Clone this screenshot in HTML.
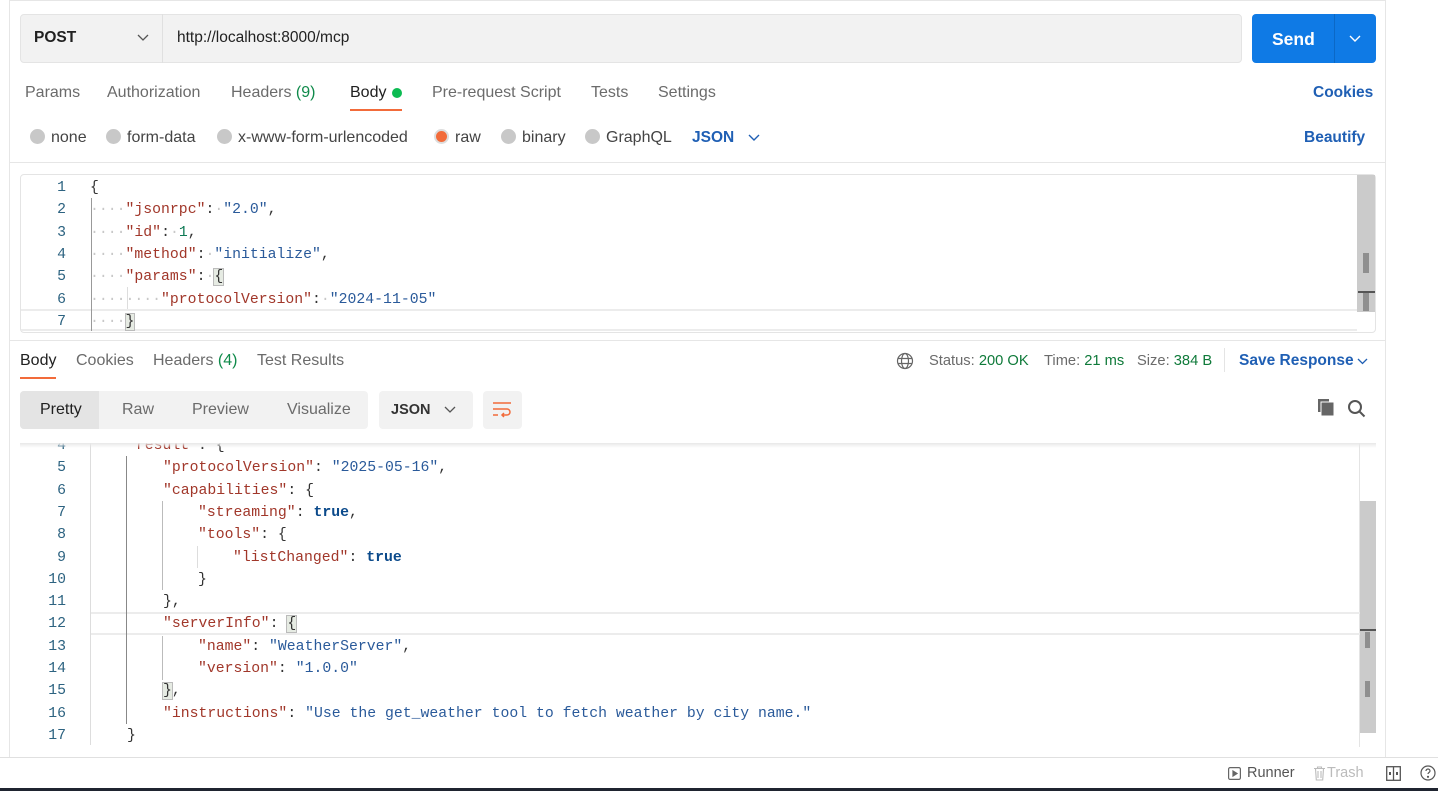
<!DOCTYPE html>
<html><head><meta charset="utf-8"><style>
*{margin:0;padding:0;box-sizing:border-box}
body{width:1438px;height:791px;overflow:hidden;background:#fff;font-family:"Liberation Sans",sans-serif;position:relative;color:#212121}
.a{position:absolute;white-space:nowrap}
.t{font-size:16px;color:#6b6b6b}
.code{font-family:"Liberation Mono",monospace;font-size:14.8px;line-height:22.3px}
.ln{position:absolute;width:40px;text-align:right;color:#2d6381;left:26px}
.k{color:#a1372a}.s{color:#2a5a9a}.n{color:#0f7a55}.b{color:#0b4a8b;font-weight:bold}.p{color:#333}
.dot{color:#c8c8c8}
.rad{display:inline-block;width:15px;height:15px;border-radius:50%;background:#c8c8c8;vertical-align:-2px;margin-right:6px}
.g{position:absolute;width:1px;background:#bbb}
</style></head><body>
<div class="a" style="left:9px;top:0;width:1377px;height:757px;border-left:1px solid #e6e6e6;border-right:1px solid #e6e6e6;border-top:1px solid #e6e6e6"></div>
<!-- URL bar -->
<div class="a" style="left:20px;top:14px;width:1222px;height:49px;background:#f2f2f2;border:1px solid #e4e4e4;border-radius:4px"></div>
<div class="a" style="left:162px;top:14px;width:1px;height:49px;background:#e0e0e0"></div>
<div class="a" style="left:34px;top:29px;font-size:15.5px;font-weight:bold;color:#212121">POST</div>
<svg class="a" style="left:137px;top:34px" width="12" height="8"><path d="M1 1l5 5 5-5" fill="none" stroke="#555" stroke-width="1.3"/></svg>
<div class="a" style="left:177px;top:29px;font-size:15.5px;color:#212121">http://localhost:8000/mcp</div>
<div class="a" style="left:1252px;top:14px;width:124px;height:49px;background:#0f7ae5;border-radius:4px"></div>
<div class="a" style="left:1334px;top:14px;width:1px;height:49px;background:#0b68c6"></div>
<div class="a" style="left:1272px;top:29px;font-size:17.5px;font-weight:bold;color:#fff">Send</div>
<svg class="a" style="left:1349px;top:35px" width="12" height="8"><path d="M1 1l5 5 5-5" fill="none" stroke="#fff" stroke-width="1.4"/></svg>
<!-- tabs -->
<div class="a t" style="left:25px;top:84px">Params</div>
<div class="a t" style="left:107px;top:84px">Authorization</div>
<div class="a t" style="left:231px;top:84px">Headers <span style="color:#0f8a4a">(9)</span></div>
<div class="a" style="left:350px;top:84px;font-size:16px;color:#212121">Body</div>
<div class="a" style="left:392px;top:88px;width:10px;height:10px;border-radius:50%;background:#0cbb52"></div>
<div class="a" style="left:350px;top:109px;width:52px;height:2px;background:#f26b3a"></div>
<div class="a t" style="left:432px;top:84px">Pre-request Script</div>
<div class="a t" style="left:591px;top:84px">Tests</div>
<div class="a t" style="left:658px;top:84px">Settings</div>
<div class="a" style="left:1313px;top:84px;font-size:15.5px;font-weight:bold;color:#1f5fb4">Cookies</div>
<!-- radios -->
<div class="a t" style="left:30px;top:129px;color:#444"><span class="rad"></span>none</div>
<div class="a t" style="left:106px;top:129px;color:#444"><span class="rad"></span>form-data</div>
<div class="a t" style="left:217px;top:129px;color:#444"><span class="rad"></span>x-www-form-urlencoded</div>
<div class="a t" style="left:434px;top:129px;color:#444"><span class="rad" style="background:#f26b3a;border:2px solid #ddd"></span>raw</div>
<div class="a t" style="left:501px;top:129px;color:#444"><span class="rad"></span>binary</div>
<div class="a t" style="left:585px;top:129px;color:#444"><span class="rad"></span>GraphQL</div>
<div class="a" style="left:692px;top:129px;font-size:15.5px;font-weight:bold;color:#1f5fb4">JSON</div>
<svg class="a" style="left:748px;top:134px" width="12" height="8"><path d="M1 1l5 5 5-5" fill="none" stroke="#1f5fb4" stroke-width="1.4"/></svg>
<div class="a" style="left:1304px;top:129px;font-size:15.5px;font-weight:bold;color:#1f5fb4">Beautify</div>
<div class="a" style="left:10px;top:162px;width:1375px;height:1px;background:#e6e6e6"></div>
<!-- request editor -->
<div class="a" style="left:20px;top:174px;width:1356px;height:159px;border:1px solid #e4e4e4;border-radius:4px"></div>
<div class="a" style="left:1357px;top:175px;width:18px;height:137px;background:#cbcbcb"></div>
<div class="a" style="left:1363px;top:253px;width:6px;height:20px;background:#8f8f8f"></div>
<div class="a" style="left:1358px;top:291px;width:17px;height:2px;background:#555"></div>
<div class="a" style="left:1363px;top:293px;width:6px;height:18px;background:#8f8f8f"></div>
<div class="a" style="left:21px;top:309px;width:1336px;height:22px;border-top:2px solid #ececec;border-bottom:2px solid #ececec"></div>
<div class="g" style="left:91px;top:198px;height:133px;background:#999"></div>
<div class="g" style="left:127px;top:287px;height:22px;background:#ddd"></div>
<div class="a code" style="left:0;top:177px;width:1340px">
<div class="ln" style="top:0">1</div><div class="ln" style="top:22.3px">2</div><div class="ln" style="top:44.6px">3</div><div class="ln" style="top:66.9px">4</div><div class="ln" style="top:89.2px">5</div><div class="ln" style="top:111.5px">6</div><div class="ln" style="top:133.8px">7</div>
<div class="a" style="left:90px;top:0"><span class="p">{</span></div>
<div class="a" style="left:90px;top:22.3px"><span class="dot">····</span><span class="k">"jsonrpc"</span><span class="p">:</span><span class="dot">·</span><span class="s">"2.0"</span><span class="p">,</span></div>
<div class="a" style="left:90px;top:44.6px"><span class="dot">····</span><span class="k">"id"</span><span class="p">:</span><span class="dot">·</span><span class="n">1</span><span class="p">,</span></div>
<div class="a" style="left:90px;top:66.9px"><span class="dot">····</span><span class="k">"method"</span><span class="p">:</span><span class="dot">·</span><span class="s">"initialize"</span><span class="p">,</span></div>
<div class="a" style="left:90px;top:89.2px"><span class="dot">····</span><span class="k">"params"</span><span class="p">:</span><span class="dot">·</span><span class="p" style="background:#e6ebe3;outline:1px solid #bbb">{</span></div>
<div class="a" style="left:90px;top:111.5px"><span class="dot">········</span><span class="k">"protocolVersion"</span><span class="p">:</span><span class="dot">·</span><span class="s">"2024-11-05"</span></div>
<div class="a" style="left:90px;top:133.8px"><span class="dot">····</span><span class="p" style="background:#e6ebe3;outline:1px solid #bbb">}</span></div>
</div>
<div class="a" style="left:10px;top:340px;width:1375px;height:1px;background:#e6e6e6"></div>
<!-- response tabs -->
<div class="a" style="left:20px;top:352px;font-size:16px;color:#212121">Body</div>
<div class="a" style="left:20px;top:377px;width:36px;height:2px;background:#f26b3a"></div>
<div class="a t" style="left:76px;top:352px">Cookies</div>
<div class="a t" style="left:153px;top:352px">Headers <span style="color:#0f8a4a">(4)</span></div>
<div class="a t" style="left:257px;top:352px">Test Results</div>
<svg class="a" style="left:896px;top:352px" width="18" height="18" fill="none" stroke="#666" stroke-width="1.2"><circle cx="9" cy="9" r="7.5"/><ellipse cx="9" cy="9" rx="3.5" ry="7.5"/><path d="M1.5 6.5h15M1.5 11.5h15"/></svg>
<div class="a" style="left:929px;top:353px;font-size:14.7px;color:#6b6b6b">Status: <span style="color:#0f7a3a">200 OK</span></div>
<div class="a" style="left:1044px;top:353px;font-size:14.7px;color:#6b6b6b">Time: <span style="color:#0f7a3a">21 ms</span></div>
<div class="a" style="left:1137px;top:353px;font-size:14.7px;color:#6b6b6b">Size: <span style="color:#0f7a3a">384 B</span></div>
<div class="a" style="left:1224px;top:348px;width:1px;height:24px;background:#e4e4e4"></div>
<div class="a" style="left:1239px;top:352px;font-size:15.5px;font-weight:bold;color:#1f5fb4">Save Response</div>
<svg class="a" style="left:1357px;top:358px" width="11" height="7"><path d="M1 1l4.5 4.5L10 1" fill="none" stroke="#1f5fb4" stroke-width="1.3"/></svg>
<!-- toolbar -->
<div class="a" style="left:20px;top:391px;width:348px;height:38px;background:#f2f2f2;border-radius:4px"></div>
<div class="a" style="left:20px;top:391px;width:79px;height:38px;background:#e4e4e4;border-radius:4px 0 0 4px"></div>
<div class="a" style="left:40px;top:401px;font-size:16px;color:#212121">Pretty</div>
<div class="a t" style="left:122px;top:401px">Raw</div>
<div class="a t" style="left:192px;top:401px">Preview</div>
<div class="a t" style="left:287px;top:401px">Visualize</div>
<div class="a" style="left:379px;top:391px;width:94px;height:38px;background:#f2f2f2;border-radius:4px"></div>
<div class="a" style="left:391px;top:402px;font-size:14.5px;font-weight:bold;color:#333">JSON</div>
<svg class="a" style="left:444px;top:406px" width="12" height="8"><path d="M1 1l5 5 5-5" fill="none" stroke="#555" stroke-width="1.3"/></svg>
<div class="a" style="left:483px;top:391px;width:39px;height:38px;background:#f2f2f2;border-radius:4px"></div>
<svg class="a" style="left:492px;top:401px" width="20" height="18" fill="none" stroke="#f26b3a" stroke-width="1.5"><path d="M1 2h18M1 8h14a3 3 0 010 6h-5M12 12l-2 2 2 2M1 14h5"/></svg>
<svg class="a" style="left:1317px;top:398px" width="19" height="20"><rect x="1" y="1" width="11" height="13" fill="#666"/><rect x="4" y="4" width="13" height="14" fill="#666" stroke="#fff" stroke-width="1"/></svg>
<svg class="a" style="left:1347px;top:399px" width="20" height="20" fill="none" stroke="#555" stroke-width="2"><circle cx="8" cy="8" r="6"/><path d="M12.5 12.5l5 5"/></svg>
<!-- response editor -->
<div class="a" style="left:1359px;top:443px;width:1px;height:304px;background:#e4e4e4"></div>
<div class="a" style="left:1360px;top:501px;width:16px;height:232px;background:#cbcbcb"></div>
<div class="a" style="left:1360px;top:629px;width:16px;height:2px;background:#555"></div>
<div class="a" style="left:1365px;top:632px;width:5px;height:16px;background:#8f8f8f"></div>
<div class="a" style="left:1365px;top:681px;width:5px;height:16px;background:#8f8f8f"></div>
<div class="a" style="left:90px;top:612px;width:1270px;height:23px;border-top:2px solid #ececec;border-bottom:2px solid #ececec"></div>
<div class="g" style="left:90px;top:443px;height:302px;background:#ddd"></div>
<div class="g" style="left:126px;top:456px;height:268px;background:#888"></div>
<div class="g" style="left:162px;top:501px;height:89px"></div>
<div class="g" style="left:197px;top:546px;height:22px;background:#ddd"></div>
<div class="g" style="left:162px;top:636px;height:44px"></div>
<div class="a" style="left:0;top:443px;width:1359px;height:305px;overflow:hidden">
<div class="a code" style="left:0;top:-8px;width:1359px">
<div class="ln" style="top:0">4</div><div class="ln" style="top:22.3px">5</div><div class="ln" style="top:44.6px">6</div><div class="ln" style="top:66.9px">7</div><div class="ln" style="top:89.2px">8</div><div class="ln" style="top:111.5px">9</div><div class="ln" style="top:133.8px">10</div><div class="ln" style="top:156.1px">11</div><div class="ln" style="top:178.4px">12</div><div class="ln" style="top:200.7px">13</div><div class="ln" style="top:223px">14</div><div class="ln" style="top:245.3px">15</div><div class="ln" style="top:267.6px">16</div><div class="ln" style="top:289.9px">17</div>
<div class="a" style="left:127px;top:0"><span class="k">"result"</span><span class="p">: {</span></div>
<div class="a" style="left:163px;top:22.3px"><span class="k">"protocolVersion"</span><span class="p">: </span><span class="s">"2025-05-16"</span><span class="p">,</span></div>
<div class="a" style="left:163px;top:44.6px"><span class="k">"capabilities"</span><span class="p">: {</span></div>
<div class="a" style="left:198px;top:66.9px"><span class="k">"streaming"</span><span class="p">: </span><span class="b">true</span><span class="p">,</span></div>
<div class="a" style="left:198px;top:89.2px"><span class="k">"tools"</span><span class="p">: {</span></div>
<div class="a" style="left:233px;top:111.5px"><span class="k">"listChanged"</span><span class="p">: </span><span class="b">true</span></div>
<div class="a" style="left:198px;top:133.8px"><span class="p">}</span></div>
<div class="a" style="left:163px;top:156.1px"><span class="p">},</span></div>
<div class="a" style="left:163px;top:178.4px"><span class="k">"serverInfo"</span><span class="p">: </span><span class="p" style="background:#e6ebe3;outline:1px solid #bbb">{</span></div>
<div class="a" style="left:198px;top:200.7px"><span class="k">"name"</span><span class="p">: </span><span class="s">"WeatherServer"</span><span class="p">,</span></div>
<div class="a" style="left:198px;top:223px"><span class="k">"version"</span><span class="p">: </span><span class="s">"1.0.0"</span></div>
<div class="a" style="left:163px;top:245.3px"><span class="p" style="background:#e6ebe3;outline:1px solid #bbb">}</span><span class="p">,</span></div>
<div class="a" style="left:163px;top:267.6px"><span class="k">"instructions"</span><span class="p">: </span><span class="s">"Use the get_weather tool to fetch weather by city name."</span></div>
<div class="a" style="left:127px;top:289.9px"><span class="p">}</span></div>
</div></div>
<div class="a" style="left:20px;top:443px;width:1356px;height:5px;background:linear-gradient(#e8e8e8,rgba(255,255,255,0))"></div>
<!-- status bar -->
<div class="a" style="left:0;top:757px;width:1438px;height:1px;background:#e0e0e0"></div>
<div class="a" style="left:0;top:758px;width:1438px;height:30px;background:#fff"></div>
<svg class="a" style="left:1228px;top:767px" width="13" height="13" fill="none" stroke="#666" stroke-width="1.2"><rect x=".6" y=".6" width="11.8" height="11.8" rx="1.5"/><path d="M5 4l4 2.5L5 9z" fill="#666"/></svg>
<div class="a" style="left:1247px;top:765px;font-size:14.5px;color:#555">Runner</div>
<svg class="a" style="left:1313px;top:766px" width="13" height="15" fill="none" stroke="#bbb" stroke-width="1.1"><path d="M1 2.5h11M4.5 2.5V1h4v1.5M2.5 2.5l.8 11.5h6.4l.8-11.5M5 5v7M8 5v7"/></svg>
<div class="a" style="left:1327px;top:765px;font-size:14.5px;color:#bbb">Trash</div>
<svg class="a" style="left:1386px;top:766px" width="15" height="15" fill="none" stroke="#555" stroke-width="1.3"><rect x=".7" y=".7" width="13.6" height="13.6"/><path d="M7.5 .7v13.6"/><rect x="3" y="6" width="2" height="3" fill="#555" stroke="none"/><rect x="10" y="6" width="2" height="3" fill="#555" stroke="none"/></svg>
<svg class="a" style="left:1420px;top:765px" width="16" height="16" fill="none" stroke="#555" stroke-width="1.2"><circle cx="8" cy="8" r="7"/><path d="M6 6a2 2 0 114 0c0 1.5-2 1.5-2 3"/><circle cx="8" cy="11.8" r=".5" fill="#555"/></svg>
<div class="a" style="left:0;top:788px;width:1438px;height:3px;background:#1f2430"></div>
</body></html>
